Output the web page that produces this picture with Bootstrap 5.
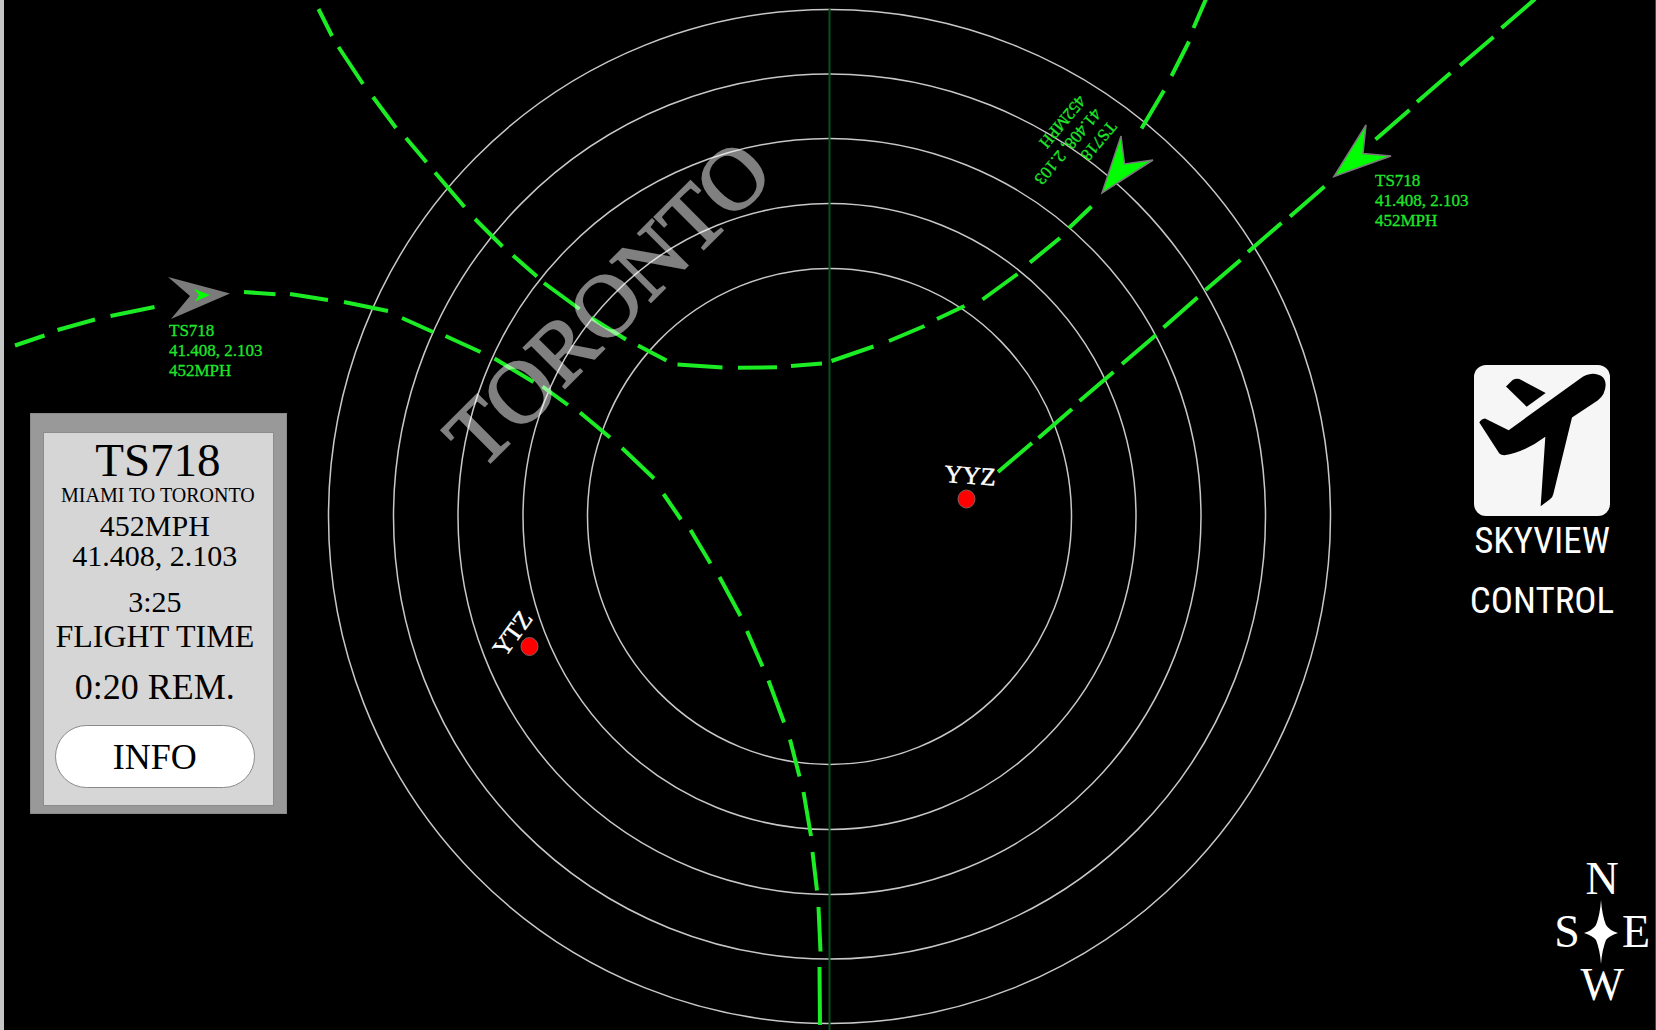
<!DOCTYPE html>
<html lang="en">
<head>
<meta charset="utf-8">
<meta name="viewport" content="width=device-width, initial-scale=1">
<title>Skyview Control</title>
<link rel="stylesheet" href="https://cdn.jsdelivr.net/npm/bootstrap@5.3.0/dist/css/bootstrap.min.css">
<style>
  body { background: #000; font-family: "Century Schoolbook", "Liberation Serif", serif; }
  .scope { border-left: 4px solid #c6c6c6; border-right: 1px solid #444; }
  .radar { left: -4px; width: calc(100% + 5px); }
  .ring { fill: none; stroke: #c8c8c8; stroke-width: 1.5; }
  .sweep { stroke: #07501a; stroke-width: 2; }
  .route { fill: none; stroke: #1cec24; stroke-width: 4; }
  .craft { fill: #0f0; stroke: #7a7a7a; stroke-width: 1.5; }
  .craft-picked { fill: #7b7b7b; }
  .tag { fill: #1fe62b; font-size: 17px; stroke: #1fe62b; stroke-width: .3; }
  .field { fill: #f00; stroke: #8a5a5a; stroke-width: 1; }
  .field-name { fill: #fff; font-size: 25px; stroke: #fff; stroke-width: .5; }
  .city { fill: #fff; stroke: #fff; stroke-width: 2; opacity: .5; font-size: 88px; }
  .left-rail { padding: 413px 0 0 26px; }
  .flight-frame { background: #999; border: 1px solid #8a8a8a; padding: 18px 12px 7px 12px; }
  .flight-body { background: #d6d6d6; border: 1px solid #8c8c8c; color: #000; padding: 2px 18px 17px 11px; }
  .flight-body p, .flight-body h1 { margin: 0; font-weight: 400; white-space: nowrap; min-width: 198px; }
  .t-code { font-size: 47px; line-height: 50px; }
  .t-leg { font-size: 20px; line-height: 20px; }
  .t-data { font-size: 30px; line-height: 30px; }
  .t-label { font-size: 32px; line-height: 30px; }
  .t-rem { font-size: 36px; line-height: 36px; }
  .flight-body .t-code, .flight-body .t-leg { padding-left: 6px; }
  .gap-s { padding-top: 4px; }
  .gap-m { padding-top: 6px; }
  .gap-l { padding-top: 16px; }
  .gap-xl { padding-top: 18px; }
  .btn-info-pill { height: 63px; margin-top: 20px; font-size: 36px; line-height: 36px; padding: 0; background: #fff; border: 1px solid #8a8a8a; color: #000; }
  .right-rail { padding: 365px 5px 19px 0; }
  .brand { width: 144px; margin-right: 36px; }
  .brand-mark { width: 136px; height: 151px; }
  .brand-name { font-family: "Agency FB", "Roboto Condensed", "Open Sans Condensed", "Liberation Sans Narrow", "Liberation Sans", sans-serif; font-size: 37px; line-height: 50px; gap: 10px; color: #fff; white-space: nowrap; }
  .compass { color: #fff; font-size: 46px; line-height: 53px; }
  .compass-star { width: 34px; height: 64px; margin: -6px 0; }
</style>
<script src="https://cdn.jsdelivr.net/npm/bootstrap@5.3.0/dist/js/bootstrap.bundle.min.js"></script>
</head>
<body>
<main class="scope position-relative min-vh-100 overflow-hidden d-flex justify-content-between">
  <svg class="radar position-absolute top-0 h-100" viewBox="0 0 1656 1030" preserveAspectRatio="xMidYMid slice" role="img" aria-label="Toronto radar map">
    <g class="ring">
      <ellipse cx="829.500" cy="516.5" rx="501" ry="507"/>
      <ellipse cx="829.500" cy="516.5" rx="436" ry="442.5"/>
      <ellipse cx="829.500" cy="516.5" rx="371.5" ry="378"/>
      <ellipse cx="829.500" cy="516.5" rx="306.5" ry="313"/>
      <ellipse cx="829.500" cy="516.5" rx="242" ry="248"/>
    </g>
    <path class="sweep" d="M829.5 9V1030"/>
    <!-- southbound arc -->
    <path class="route" d="M15 345.5L44.500 335.500M57.500 330L95 319.500M110.500 316L154.500 307M244 292L275.500 294.300M290 294L328 300M344 302L388 311M402 318L433 332M445.500 336L480.500 352M494.500 358.500L533.500 382M542.500 386.500L568 405M580 412.500L610 437.500M622 448L654 478.500M663.500 494L681 519.500M690.500 530L710.500 563.500M719.500 577L740.500 616M747 631L762.500 666.500M768.500 680.500L784 722.500M790 739.500L799.500 776.500M803.500 792L811 836M812.500 852L817 890.500M818.500 907L820.500 951.500M819.500 967L820 1025"/>
    <!-- northern arc -->
    <path class="route" d="M318.500 9L332 36M338.500 47L363 84M373 97L396 128M406 138L426.500 162.300M435 172.500L464.500 207M475 219L502.500 246.500M513 255.500L537 276.500M544 283L579.500 309M591.500 318L626 339.500M638 345.500L666.500 360.500M677.500 364.500L722.500 367.500M738 367.800L777 367.300M791 366L822 363.500M831.500 361L873.500 346.500M889 341L924.500 326M937 319L964.500 306M982.500 299.500L1017.500 274M1030 262.500L1060 238M1069 228L1091.500 206.500M1141.500 128.500L1164 90.500M1171.500 76L1189 41.500M1193.500 28L1206 -1"/>
    <!-- approach to YYZ -->
    <path class="route" d="M1535 -1L1501.500 28M1493.500 37L1460 65.500M1450.500 73L1417 102M1409.500 110L1375.500 139.500M1324.500 186.500L1290 216.500M1281.500 223L1248 252M1240.500 260L1205.500 290M1197.500 297.500L1163.500 327.500M1156 335L1122 364M1113.500 372L1079.500 401M1072 409L1038.500 438M1032 443L998 472"/>
    <text class="city" transform="translate(481 472) rotate(-45)">TORONTO</text>
    <path class="craft-picked" d="M168 277L230 293.500L171 319L190 296Z"/>
    <path fill="#0f0" d="M194 289L210 295L195 301.500L199 295Z"/>
    <path class="craft" d="M1102 193L1121 136L1124.500 164L1153 160Z"/>
    <path class="craft" d="M1334 176.500L1366 125L1363 153.500L1391 156Z"/>
    <text class="tag"><tspan x="169" y="336">TS718</tspan><tspan x="169" y="356">41.408, 2.103</tspan><tspan x="169" y="376">452MPH</tspan></text>
    <text class="tag"><tspan x="1375" y="186">TS718</tspan><tspan x="1375" y="206">41.408, 2.103</tspan><tspan x="1375" y="226">452MPH</tspan></text>
    <text class="tag" transform="translate(1109 120) rotate(130)"><tspan x="0" y="0">TS718</tspan><tspan x="0" y="20">41.408, 2.103</tspan><tspan x="0" y="40">452MPH</tspan></text>
    <text class="field-name" transform="translate(944 482) rotate(4)">YYZ</text>
    <text class="field-name" transform="translate(505 658) rotate(-54)">YTZ</text>
    <ellipse class="field" cx="966.500" cy="499" rx="8.500" ry="9"/>
    <ellipse class="field" cx="529.500" cy="646.500" rx="8.500" ry="9"/>
  </svg>

  <aside class="left-rail position-relative">
    <section class="flight-frame" aria-label="Selected flight">
      <div class="flight-body text-center d-flex flex-column">
        <h1 class="t-code">TS718</h1>
        <p class="t-leg">MIAMI TO TORONTO</p>
        <p class="t-data gap-m">452MPH</p>
        <p class="t-data">41.408, 2.103</p>
        <p class="t-data gap-l">3:25</p>
        <p class="t-label gap-s">FLIGHT TIME</p>
        <p class="t-rem gap-xl">0:20 REM.</p>
        <button type="button" class="btn btn-info-pill rounded-pill">INFO</button>
      </div>
    </section>
  </aside>

  <aside class="right-rail position-relative d-flex flex-column align-items-end justify-content-between">
    <div class="brand d-flex flex-column align-items-center">
      <svg class="brand-mark" viewBox="74 46 408 452" preserveAspectRatio="none" aria-hidden="true">
        <rect x="74" y="46" width="408" height="452" rx="36" fill="#f6f6f6"/>
        <path d="M170 110L190 91Q200 85 210 88L289 130L232 171Z"/>
        <path d="M178 241L395 85Q410 73 430 72Q468 74 469 105Q468 135 445 152L368 203L312 432Q310 442 302 448L274 469L288 261Q225 308 165 316Q155 316 150 311L90 218Q95 207 107 206Z"/>
      </svg>
      <div class="brand-name d-flex flex-column align-items-center"><span>SKYVIEW</span><span>CONTROL</span></div>
    </div>
    <div class="compass d-flex flex-column align-items-center">
      <span>N</span>
      <div class="d-flex align-items-center gap-1">
        <span>S</span>
        <svg class="compass-star" viewBox="0 0 34 64" aria-hidden="true"><path fill="#fff" d="M17 0Q18 15 22 25Q25 30 34 33Q25 36 22 40Q18 50 17 64Q16 50 12 40Q9 36 0 33Q9 30 12 25Q16 15 17 0Z"/></svg>
        <span>E</span>
      </div>
      <span>W</span>
    </div>
  </aside>
</main>
</body>
</html>
